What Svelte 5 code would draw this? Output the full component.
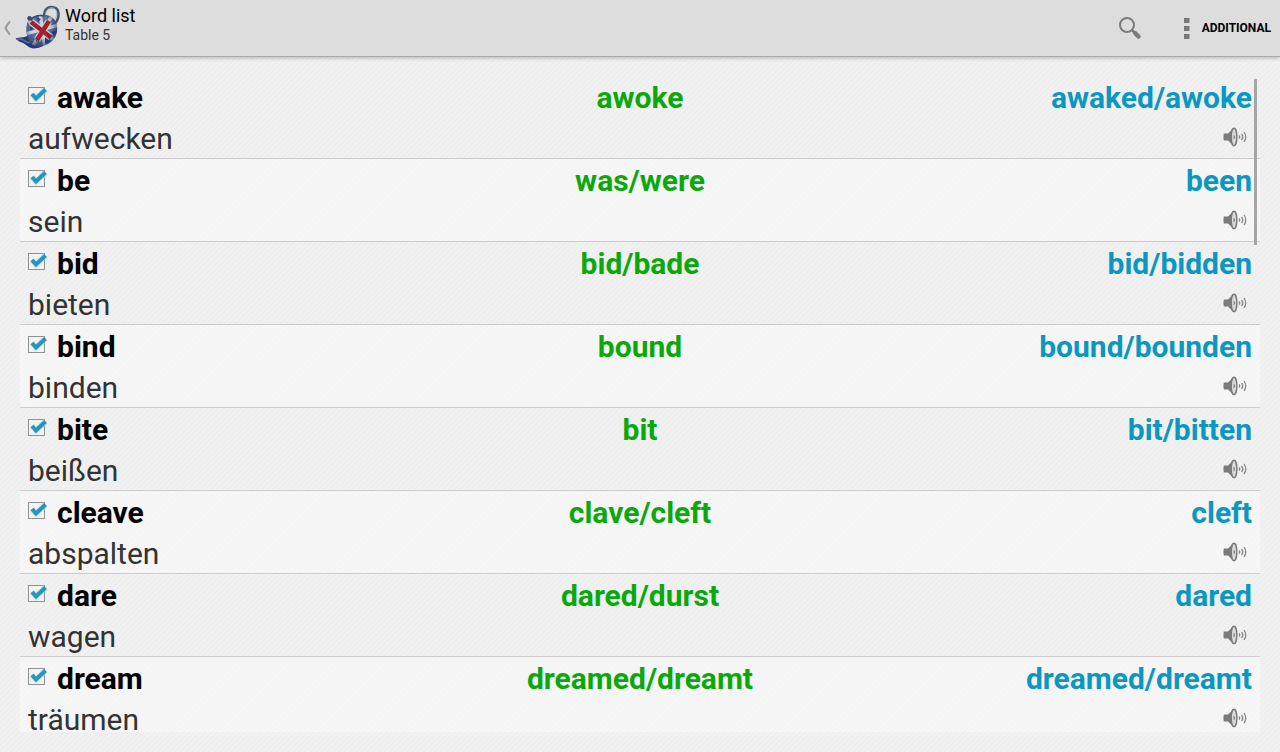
<script>
  let words = $state([
    { base: 'awake', past: 'awoke', participle: 'awaked/awoke', meaning: 'aufwecken', checked: true },
    { base: 'be', past: 'was/were', participle: 'been', meaning: 'sein', checked: true },
    { base: 'bid', past: 'bid/bade', participle: 'bid/bidden', meaning: 'bieten', checked: true },
    { base: 'bind', past: 'bound', participle: 'bound/bounden', meaning: 'binden', checked: true },
    { base: 'bite', past: 'bit', participle: 'bit/bitten', meaning: 'beißen', checked: true },
    { base: 'cleave', past: 'clave/cleft', participle: 'cleft', meaning: 'abspalten', checked: true },
    { base: 'dare', past: 'dared/durst', participle: 'dared', meaning: 'wagen', checked: true },
    { base: 'dream', past: 'dreamed/dreamt', participle: 'dreamed/dreamt', meaning: 'träumen', checked: true }
  ]);
</script>

<div class="screen">
  <header>
    <button class="home" aria-label="Navigate up">
      <svg class="back" viewBox="0 0 8 16" aria-hidden="true"><path d="M6 1.500Q3.500 4 1.500 8q2 4 4.500 6.500" /></svg>
      <svg class="logo" viewBox="0 0 46 46" aria-hidden="true">
        <defs>
          <clipPath id="pot"><path d="M13 16C19 9 33 7 39 14c5 6 4 17-2 22-6 6-15 7-20 3-6-5-7-16-4-23z" /></clipPath>
          <radialGradient id="shade" cx=".45" cy=".42" r=".6">
            <stop offset=".5" stop-color="#18254c" stop-opacity="0" />
            <stop offset="1" stop-color="#18254c" stop-opacity=".75" />
          </radialGradient>
        </defs>
        <path d="M30 13C28 7 31 2 36.500 2c8 0 9 9 4 16" fill="none" stroke="#465566" stroke-width="2.500" />
        <path d="M31 12C29.500 7 32 3 36.500 2.500c5 .2 6.500 5 4 11" fill="none" stroke="#9aabb6" stroke-width=".8" />
        <path d="M.5 33.500C4 32 9 33 12 31l3-3 14 12.500c-3 2-7 3-11 3-4-.5-6-3-9-5-3-1.500-5-1.500-8.500-5z" fill="#263b74" />
        <path d="M2 34.200c5-1 7 1 9 2.500 2 1.500 3 1 4 0" fill="none" stroke="#5370a5" stroke-width="1.500" />
        <g clip-path="url(#pot)">
          <path d="M9 7h37v37H9z" fill="#5872a0" />
          <path d="m9 13 34 25M39 8 17 42M25 8l5 34M10 29l34-9" stroke="#cbd2d9" stroke-width="3.500" />
          <path d="m15 19 6 3-6 4zm6-7 5 2-3 3zm15 15 7-2-4 6zm-6 5 5 4-5 3zm-10 1 4-3-2 8z" fill="#30487e" />
          <path d="m16 17 20 15.500M34 16 22 35" stroke="#ced1d7" stroke-width="7" />
          <path d="m16 17 20 15.500M34 16 22 35" stroke="#a3202c" stroke-width="4.500" />
          <ellipse cx="27" cy="25" rx="17" ry="18" fill="url(#shade)" />
        </g>
        <path d="M15 15c4-4 9-5 14-4" fill="none" stroke="#344877" stroke-width="1.500" />
        <circle cx="14.500" cy="13.300" r="2.200" fill="#3a4578" />
      </svg>
      <span class="titles">
        <span class="title">Word list</span>
        <span class="subtitle">Table 5</span>
      </span>
    </button>
    <div class="actions">
      <button class="search" aria-label="Search">
        <svg viewBox="0 0 24 24" aria-hidden="true">
          <circle cx="9" cy="9" r="7" fill="none" stroke="#7c7c7c" stroke-width="2" />
          <path d="m14 14 3 3" stroke="#7c7c7c" stroke-width="2.500" />
          <path d="m17.500 17.500 3 3" stroke="#7c7c7c" stroke-width="4.500" stroke-linecap="round" />
        </svg>
      </button>
      <button class="more">
        <svg viewBox="0 0 6 21" aria-hidden="true"><path d="M0 0h5.500v5H0zM0 8h5.500v5H0zM0 16h5.500v5H0z" /></svg>
        ADDITIONAL
      </button>
    </div>
  </header>

  <main>
    <ul>
      {#each words as word (word.base)}
        <li>
          <div class="forms">
            <label>
              <span class="tick">
                <input type="checkbox" bind:checked={word.checked} />
                <svg viewBox="0 0 20 18" aria-hidden="true"><path class="halo" d="m4 7 4 4.500L17.500 2.500" /><path d="m4 7 4 4.500L17.500 2.500" /></svg>
              </span>
              <span>{word.base}</span>
            </label>
            <span class="past">{word.past}</span>
            <span class="participle">{word.participle}</span>
          </div>
          <div class="translation">
            <span>{word.meaning}</span>
            <button aria-label="Pronounce {word.base}">
              <svg viewBox="0 0 24 20" aria-hidden="true">
                <path d="M.8 6.500Q0 10 .8 13.500h4.200L10 18.500v-17L5 6.500z" fill="#7b7b7b" />
                <ellipse cx="11" cy="10" rx="2.800" ry="8.700" fill="#dcdcdc" stroke="#7b7b7b" stroke-width="1.500" />
                <path d="M10.500 7.500q3 2.500 0 5z" fill="#7b7b7b" />
                <path d="M16 8.500q1.500 1.500 0 3M18.500 7q2.500 3 0 6M21 5q3.500 5 0 10" fill="none" stroke="#858585" stroke-width="1.300" />
              </svg>
            </button>
          </div>
        </li>
      {/each}
    </ul>
    <div class="thumb"></div>
  </main>
</div>

<style>
  :global(body) {
    margin: 0;
  }
  .screen {
    box-sizing: border-box;
    height: 100vh;
    display: flex;
    flex-direction: column;
    overflow: hidden;
    font-family: Roboto, sans-serif;
    color: #000;
    background: repeating-linear-gradient(135deg, #f1f1f1 0 2px, #ededed 3px 4px);
  }
  button {
    padding: 0;
    border: 0;
    background: none;
    font: inherit;
    color: inherit;
  }
  svg {
    display: block;
  }
  header {
    flex: none;
    display: flex;
    align-items: center;
    justify-content: space-between;
    height: 56px;
    background: #ddd;
    border-bottom: 1px solid #a9a9a9;
    box-shadow: 0 1px 4px rgba(0, 0, 0, 0.25);
  }
  .home {
    display: flex;
    align-items: center;
    height: 100%;
    padding-left: 4px;
    text-align: left;
  }
  .back {
    width: 8px;
    height: 16px;
    fill: none;
    stroke: #999;
    stroke-width: 2;
  }
  .logo {
    width: 46px;
    height: 46px;
    margin: 0 4px 0 3px;
  }
  .titles {
    display: flex;
    flex-direction: column;
    padding-bottom: 6px;
  }
  .title {
    font-size: 18px;
    line-height: 20px;
  }
  .subtitle {
    font-size: 14px;
    line-height: 18px;
    color: #333;
  }
  .actions {
    display: flex;
    align-items: center;
    padding-right: 9px;
    gap: 42px;
  }
  .search svg {
    width: 24px;
    height: 24px;
  }
  .more {
    display: flex;
    align-items: center;
    gap: 12px;
    font-size: 12px;
    font-weight: 700;
  }
  .more svg {
    width: 6px;
    height: 21px;
    fill: #777;
  }
  main {
    position: relative;
    flex: 1;
    min-height: 0;
    margin: 19px 20px 20px;
    display: flex;
    flex-direction: column;
  }
  ul {
    flex: 1;
    min-height: 0;
    margin: 0;
    padding: 0;
    list-style: none;
    overflow-y: auto;
    scrollbar-width: none;
  }
  li {
    padding: 2px 8px;
    border-bottom: 1px solid #cdcdcd;
    font-size: 30px;
    line-height: 40px;
  }
  li:nth-child(even) {
    background: rgba(255, 255, 255, 0.4);
  }
  .forms {
    display: grid;
    grid-template-columns: 1fr auto 1fr;
    font-weight: 700;
  }
  label {
    display: flex;
    align-items: center;
    gap: 9px;
  }
  .tick {
    position: relative;
    width: 20px;
    height: 22px;
  }
  input {
    appearance: none;
    display: block;
    box-sizing: border-box;
    width: 17px;
    height: 17px;
    margin: 0;
    border: 1px solid #909090;
    background: #f3f3f3;
  }
  .tick svg {
    position: absolute;
    inset: 0;
    width: 20px;
    height: 18px;
    fill: none;
    stroke: #2496bd;
    stroke-width: 4;
    pointer-events: none;
    visibility: hidden;
  }
  .tick .halo {
    stroke: #a9deef;
    stroke-width: 6;
    opacity: 0.6;
  }
  input:checked + svg {
    visibility: visible;
  }
  .past {
    color: #0aa80a;
  }
  .participle {
    color: #0c96c2;
    text-align: right;
  }
  .translation {
    display: flex;
    align-items: flex-start;
    justify-content: space-between;
    padding-top: 4px;
    line-height: 34px;
    color: #333;
  }
  .translation button {
    padding: 5px 5px 0 0;
  }
  .translation svg {
    width: 24px;
    height: 20px;
  }
  .thumb {
    position: absolute;
    top: 3px;
    right: 3px;
    width: 3px;
    height: 166px;
    background: #a6a6a6;
  }
</style>
